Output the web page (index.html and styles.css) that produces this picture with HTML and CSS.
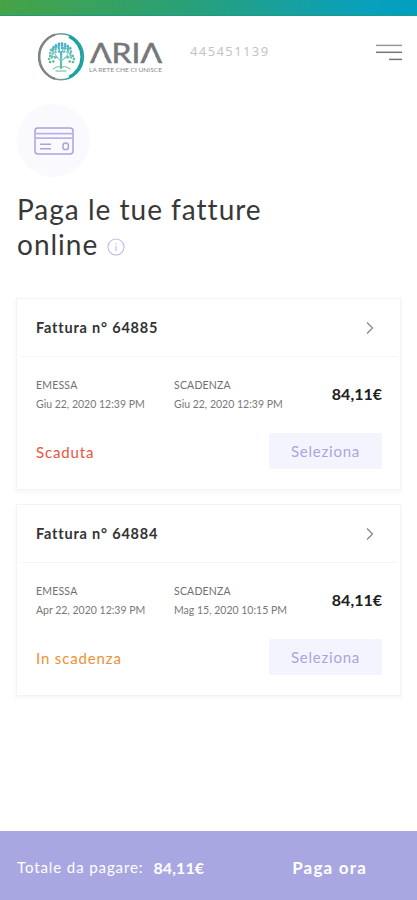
FILE: index.html
```html
<!DOCTYPE html>
<html lang="it">
<head>
<meta charset="utf-8">
<meta name="viewport" content="width=device-width, initial-scale=1">
<title>Paga le tue fatture online</title>
<link rel="stylesheet" href="styles.css">
</head>
<body>
<div class="app">
  <div class="strip"></div>
  <header class="header">
    <svg class="logo" width="130" height="54" viewBox="0 0 130 54" role="img" aria-label="ARIA">
      <defs>
        <linearGradient id="ring" x1="0" y1="0" x2="1" y2="0">
          <stop offset="0" stop-color="#777b7c"/><stop offset=".45" stop-color="#899293"/><stop offset=".7" stop-color="#2aa9a5"/><stop offset="1" stop-color="#159c9b"/>
        </linearGradient>
        <linearGradient id="tree" x1="0" y1="0" x2="0" y2="1">
          <stop offset="0" stop-color="#3ba9cf"/><stop offset=".5" stop-color="#6fc3bb"/><stop offset="1" stop-color="#62b796"/>
        </linearGradient>
      </defs>
      <g fill="none">
        <ellipse cx="25" cy="26.7" rx="22.3" ry="23" stroke="url(#ring)" stroke-width="1.6"/>
        <path d="M19 4.6A22.6 23.2 0 0 0 19 48.8" stroke="#808485" stroke-width="2.3"/>
        <path d="M33 6.6A21.8 22.2 0 0 1 33 46.8" stroke="#1aa19f" stroke-width="2.3"/>
      </g>
      <g fill="none" stroke="url(#tree)" stroke-linecap="round">
        <path stroke-width="2.2" d="M25.2 22L25 37"/>
        <path stroke-width="1" d="M25 31Q21 29 19 24M25 31Q30 29 32 24M25 24L22 17M25 24L28 17M22 28L14 25M28 28L36 25M17 39Q24 34 25 39Q27 34 34 39M20 41H30"/>
        <path stroke-width="2.5" stroke-dasharray=".2 3.1" d="M15 20Q25 7 36 20M17 19Q25 12 33 19M14 23Q25 13 37 23M14 26Q20 20 24 22M37 26Q31 20 27 22M13 29Q16 26 21 28M38 29Q34 26 30 28M14 32L20 31M37 32L31 31"/>
      </g>
      <text class="logo-name" x="54" y="33" textLength="72" lengthAdjust="spacingAndGlyphs">ARIA</text>
      <path d="M59 30L62.3 22.5H66.9L70.2 30ZM109.8 30L113.1 22.5H117.7L121 30Z" fill="#fff"/>
      <text class="logo-tag" x="53" y="42" textLength="73" lengthAdjust="spacingAndGlyphs">LA RETE CHE CI UNISCE</text>
    </svg>
    <span class="account">445451139</span>
    <svg class="menu" width="28" height="20" viewBox="0 0 28 20" fill="none" stroke="#777" stroke-width="1.5">
      <path d="M1 3.4H27" stroke="#999"/><path d="M1 10.3H27"/><path d="M14 17.4H27"/>
    </svg>
  </header>
  <main class="main">
    <div class="badge">
      <svg width="40" height="28" viewBox="0 0 40 28" fill="none" stroke="#a9a3e0" stroke-width="1.5">
        <rect x="1" y="1" width="38" height="26" rx="3"/>
        <path d="M1 6.7H39M1 11.2H39" stroke="#b8b4e9" stroke-width="1.8"/>
        <path d="M6 17.3H17M6 21.7H17"/>
        <rect x="29" y="16" width="5.4" height="6.6" rx="2.4"/>
      </svg>
    </div>
    <h1 class="title">Paga le tue fatture<br><span class="title-end">online</span>
      <svg class="info" width="18" height="18" viewBox="0 0 18 18" fill="none" stroke="#bcb8ec" stroke-width="1.1">
        <circle cx="9" cy="9" r="8"/><path d="M9 8V13M9 5V6.5"/>
      </svg>
    </h1>
    <section class="card">
      <div class="card-head">
        <h2 class="card-title">Fattura n° 64885</h2>
        <svg class="chevron" width="10" height="14" viewBox="0 0 10 14"><path d="M2 1.5L7.5 7L2 12.5"/></svg>
      </div>
      <div class="details">
        <div class="field"><div class="label">EMESSA</div><div class="date">Giu 22, 2020 12:39 PM</div></div>
        <div class="field"><div class="label">SCADENZA</div><div class="date">Giu 22, 2020 12:39 PM</div></div>
        <div class="amount">84,11€</div>
      </div>
      <div class="card-foot"><span class="status overdue">Scaduta</span><button class="select">Seleziona</button></div>
    </section>
    <section class="card">
      <div class="card-head">
        <h2 class="card-title">Fattura n° 64884</h2>
        <svg class="chevron" width="10" height="14" viewBox="0 0 10 14"><path d="M2 1.5L7.5 7L2 12.5"/></svg>
      </div>
      <div class="details">
        <div class="field"><div class="label">EMESSA</div><div class="date">Apr 22, 2020 12:39 PM</div></div>
        <div class="field"><div class="label">SCADENZA</div><div class="date">Mag 15, 2020 10:15 PM</div></div>
        <div class="amount">84,11€</div>
      </div>
      <div class="card-foot"><span class="status due">In scadenza</span><button class="select">Seleziona</button></div>
    </section>
  </main>
  <footer class="footer">
    <span class="total-label">Totale da pagare:</span>
    <span class="total">84,11€</span>
    <button class="pay">Paga ora</button>
  </footer>
</div>
</body>
</html>
```
FILE: styles.css
```css
* { box-sizing: border-box; }
body { margin: 0; background: #fff; font-family: Lato, "Liberation Sans", sans-serif; color: #333; }
button { border: 0; font-family: inherit; padding: 0; }
.app { height: 900px; display: flex; flex-direction: column; overflow: hidden; }
.strip { height: 16px; flex: none; background: linear-gradient(90deg, #46a346, #29a078 45%, #08a0bd 88%, #029fc0); border-bottom: 1px solid #1c9b80; }
.header { height: 88px; flex: none; display: flex; align-items: flex-start; padding: 14px 14px 0 36px; }
.logo-name { font: 400 27px Lato, sans-serif; fill: #747879; stroke: #747879; stroke-width: .5px; }
.logo-tag { font: 400 6px/6px Lato, sans-serif; fill: #85898b; }
.account { margin: 13px 0 0 24px; font: 400 13px/16px "Noto Sans", sans-serif; letter-spacing: 1.4px; color: #c4c4c4; white-space: nowrap; }
.menu { margin: 12px 0 0 auto; }
.main { flex: 1; padding: 0 16px; }
.badge { width: 73px; height: 73px; margin-left: 1px; border-radius: 50%; background: #f9f9fe; display: flex; align-items: center; justify-content: center; }
.title { height: 70px; margin: 15px 0 0 1px; font-size: 28px; line-height: 35px; font-weight: 400; letter-spacing: 1px; color: #383838; white-space: nowrap; }
.info { margin-left: 1px; vertical-align: -1px; }
.card { height: 192px; margin-top: 14px; background: #fff; border: 1px solid #f4f4f5; box-shadow: 0 2px 3px 1px #f8f8f9; padding: 0 18px 0 19px; }
.title + .card { margin-top: 36px; }
.card-head { height: 58px; margin: 0 -15px; padding: 0 22px 0 15px; display: flex; align-items: center; justify-content: space-between; border-bottom: 1px solid #f5f5f6; }
.card-title { margin: 0; font-size: 14.5px; line-height: 20px; font-weight: 700; letter-spacing: .8px; color: #333; }
.chevron { fill: none; stroke: #888; stroke-width: 1.3; margin-top: 1px; }
.details { display: grid; grid-template-columns: 138px 1fr auto; padding-top: 19px; }
.label { font-size: 10.5px; letter-spacing: .2px; line-height: 18px; color: #707070; white-space: nowrap; }
.date { margin-top: 1px; font-size: 10.5px; line-height: 18px; color: #787878; white-space: nowrap; }
.amount { padding-top: 7px; font-size: 16px; line-height: 22px; font-weight: 700; color: #202020; }
.card-foot { margin-top: 20px; display: flex; align-items: center; justify-content: space-between; }
.status { font-size: 15px; letter-spacing: .85px; line-height: 20px; margin-top: 2px; }
.overdue { color: #e95540; }
.due { color: #f09032; }
.select { width: 113px; height: 36px; border-radius: 2px; background: #f4f4fe; color: #aaa5df; font-size: 15px; letter-spacing: .75px; }
.footer { height: 69px; flex: none; display: flex; align-items: center; padding: 3px 17px 0; background: #a9a7e1; color: #fff; white-space: nowrap; }
.total-label { font-size: 15px; letter-spacing: .9px; }
.total { margin-left: 10px; font-size: 16px; letter-spacing: .1px; font-weight: 700; }
.pay { margin: 0 33px 0 auto; background: none; color: #fff; font-size: 17px; font-weight: 700; letter-spacing: 1.2px; }
```
